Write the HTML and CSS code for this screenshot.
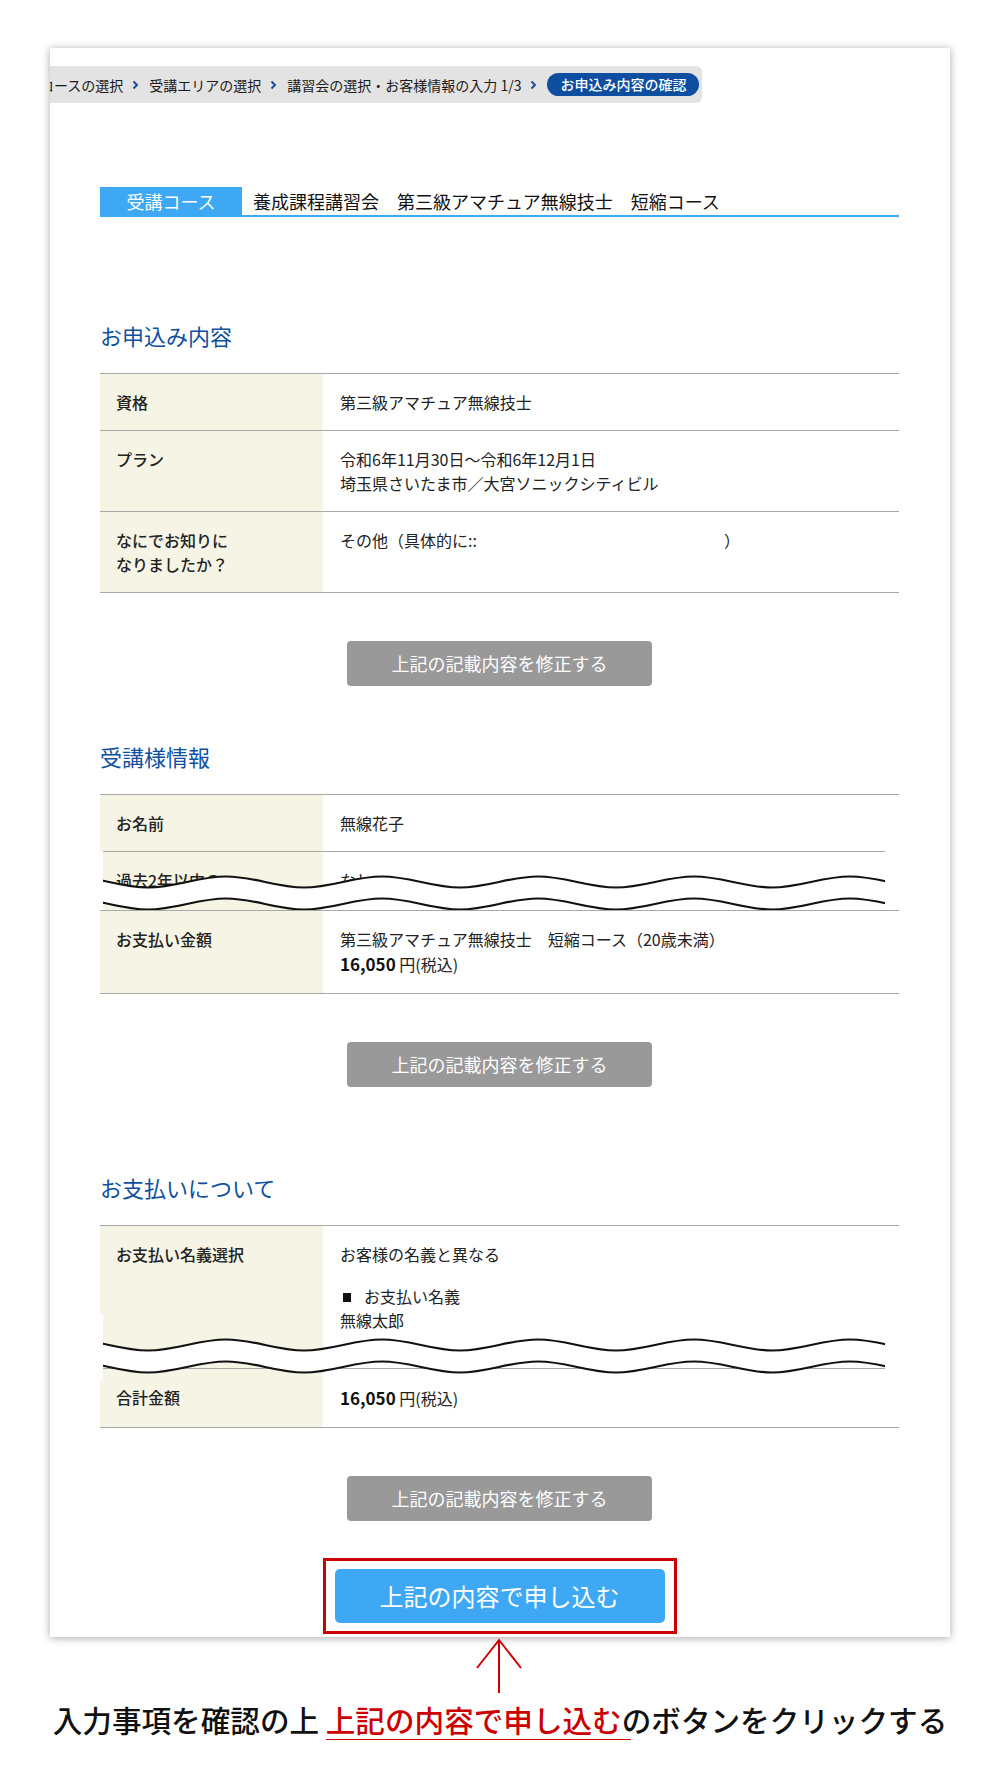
FILE: index.html
```html
<!DOCTYPE html>
<html lang="ja">
<head>
<meta charset="utf-8">
<title>お申込み内容の確認</title>
<link rel="stylesheet" href="styles.css">
</head>
<body>
<div class="page">
  <div class="card">
    <nav class="crumbs">
      <span class="crumb">コースの選択</span>
      <svg class="chev" viewBox="0 0 7 10"><path d="M1.5 1.5 L5 5 L1.5 8.5"/></svg>
      <span class="crumb">受講エリアの選択</span>
      <svg class="chev" viewBox="0 0 7 10"><path d="M1.5 1.5 L5 5 L1.5 8.5"/></svg>
      <span class="crumb">講習会の選択・お客様情報の入力 1/3</span>
      <svg class="chev" viewBox="0 0 7 10"><path d="M1.5 1.5 L5 5 L1.5 8.5"/></svg>
      <span class="crumb-current">お申込み内容の確認</span>
    </nav>

    <div class="content">
      <div class="course">
        <div class="course-label">受講コース</div>
        <div class="course-name">養成課程講習会　第三級アマチュア無線技士　短縮コース</div>
      </div>

      <h2 class="sec-title sec-title-1">お申込み内容</h2>
      <div class="table">
        <div class="row">
          <div class="th">資格</div>
          <div class="td">第三級アマチュア無線技士</div>
        </div>
        <div class="row">
          <div class="th">プラン</div>
          <div class="td">令和6年11月30日～令和6年12月1日<br>埼玉県さいたま市／大宮ソニックシティビル</div>
        </div>
        <div class="row">
          <div class="th">なにでお知りに<br>なりましたか？</div>
          <div class="td">その他（具体的に::<span class="blank"></span>）</div>
        </div>
      </div>
      <div class="btn-row"><button class="btn-edit">上記の記載内容を修正する</button></div>

      <h2 class="sec-title sec-title-2">受講様情報</h2>
      <div class="table">
        <div class="row">
          <div class="th">お名前</div>
          <div class="td">無線花子</div>
        </div>
        <div class="row row-cut">
          <div class="th">過去2年以内の</div>
          <div class="td">なし</div>
          <svg class="cut cut-a" viewBox="0 0 799 59" width="799" height="59">
            <path class="band" d="M-30 36.5 c28.4 0 49.6 11 78 11 s49.6 -11 78 -11 s49.6 11 78 11 s49.6 -11 78 -11 s49.6 11 78 11 s49.6 -11 78 -11 s49.6 11 78 11 s49.6 -11 78 -11 s49.6 11 78 11 s49.6 -11 78 -11 s49.6 11 78 11"/>
            <path class="wave" d="M-30 25.5 c28.4 0 49.6 11 78 11 s49.6 -11 78 -11 s49.6 11 78 11 s49.6 -11 78 -11 s49.6 11 78 11 s49.6 -11 78 -11 s49.6 11 78 11 s49.6 -11 78 -11 s49.6 11 78 11 s49.6 -11 78 -11 s49.6 11 78 11"/>
            <path class="wave" d="M-30 47.5 c28.4 0 49.6 11 78 11 s49.6 -11 78 -11 s49.6 11 78 11 s49.6 -11 78 -11 s49.6 11 78 11 s49.6 -11 78 -11 s49.6 11 78 11 s49.6 -11 78 -11 s49.6 11 78 11 s49.6 -11 78 -11 s49.6 11 78 11"/>
            <rect x="0" y="0" width="3" height="59" fill="#fff"/>
            <rect x="785" y="0" width="14" height="59" fill="#fff"/>
          </svg>
        </div>
        <div class="row">
          <div class="th">お支払い金額</div>
          <div class="td">第三級アマチュア無線技士　短縮コース（20歳未満）<br><span class="price"><b>16,050</b> 円(税込)</span></div>
        </div>
      </div>
      <div class="btn-row"><button class="btn-edit">上記の記載内容を修正する</button></div>

      <h2 class="sec-title sec-title-3">お支払いについて</h2>
      <div class="table">
        <div class="row row-host">
          <div class="th">お支払い名義選択</div>
          <div class="td td-tall">
            <p>お客様の名義と異なる</p>
            <p class="sub"><span class="sq"></span>お支払い名義</p>
            <p>無線太郎</p>
          </div>
          <svg class="cut cut-b" viewBox="0 0 799 67" width="799" height="67">
            <path class="band" d="M-30 36.5 c28.4 0 49.6 11 78 11 s49.6 -11 78 -11 s49.6 11 78 11 s49.6 -11 78 -11 s49.6 11 78 11 s49.6 -11 78 -11 s49.6 11 78 11 s49.6 -11 78 -11 s49.6 11 78 11 s49.6 -11 78 -11 s49.6 11 78 11"/>
            <path class="wave" d="M-30 25.5 c28.4 0 49.6 11 78 11 s49.6 -11 78 -11 s49.6 11 78 11 s49.6 -11 78 -11 s49.6 11 78 11 s49.6 -11 78 -11 s49.6 11 78 11 s49.6 -11 78 -11 s49.6 11 78 11 s49.6 -11 78 -11 s49.6 11 78 11"/>
            <path class="wave" d="M-30 47.5 c28.4 0 49.6 11 78 11 s49.6 -11 78 -11 s49.6 11 78 11 s49.6 -11 78 -11 s49.6 11 78 11 s49.6 -11 78 -11 s49.6 11 78 11 s49.6 -11 78 -11 s49.6 11 78 11 s49.6 -11 78 -11 s49.6 11 78 11"/>
            <rect x="0" y="0" width="3" height="67" fill="#fff"/>
            <rect x="785" y="0" width="14" height="67" fill="#fff"/>
          </svg>
        </div>
        <div class="row">
          <div class="th">合計金額</div>
          <div class="td"><span class="price"><b>16,050</b> 円(税込)</span></div>
        </div>
      </div>
      <div class="btn-row"><button class="btn-edit">上記の記載内容を修正する</button></div>

      <div class="submit-row">
        <div class="submit-frame"><button class="btn-submit">上記の内容で申し込む</button></div>
      </div>
    </div>
  </div>

  <svg class="arrow" viewBox="0 0 50 60" width="50" height="60">
    <path d="M24 3 L24 56"/>
    <path d="M2 31 L24 3 L46 31"/>
  </svg>
  <p class="caption">入力事項を確認の上 <span class="em">上記の内容で申し込む</span>のボタンをクリックする</p>
</div>
</body>
</html>
```

FILE: styles.css
```css
* {
  box-sizing: border-box;
  margin: 0;
  padding: 0;
}

body {
  margin: 0;
  background: #fff;
  font-family: "Noto Sans CJK JP", "Noto Sans", sans-serif;
  color: #222;
}

.page {
  width: 1000px;
  padding-top: 48px;
}

.card {
  width: 900px;
  margin-left: 50px;
  background: #fff;
  box-shadow: 0 1px 8px rgba(0, 0, 0, 0.35);
  overflow: hidden;
  padding-bottom: 3px;
}

/* breadcrumb */
.crumbs {
  display: inline-flex;
  align-items: center;
  height: 37px;
  margin-top: 18px;
  margin-left: -10px;
  padding-right: 3px;
  background: #e3e3e3;
  border-radius: 0 6px 6px 0;
  font-size: 14px;
  line-height: 20px;
  color: #1a1a1a;
  white-space: nowrap;
}

.chev {
  width: 7px;
  height: 10px;
  margin: 0 10px 0 9px;
  fill: none;
  stroke: #1b4f98;
  stroke-width: 2;
}

.crumb-current {
  display: inline-block;
  height: 23px;
  line-height: 23px;
  padding: 0 13px;
  border-radius: 12px;
  background: #0d4ea1;
  color: #fff;
  font-weight: 500;
}

/* content */
.content {
  padding: 0 51px 0 50px;
}

.course {
  display: flex;
  align-items: center;
  margin-top: 84px;
  border-bottom: 2px solid #3ea8f4;
}

.course-label {
  width: 142px;
  height: 28px;
  line-height: 28px;
  background: #3ea8f4;
  color: #fff;
  font-size: 18px;
  text-align: center;
}

.course-name {
  margin-left: 11px;
  font-size: 18px;
  line-height: 28px;
  color: #111;
}

.sec-title {
  font-size: 22px;
  line-height: 32px;
  font-weight: 400;
  color: #0f50a0;
}

.sec-title-1 { margin-top: 102px; }
.sec-title-2 { margin-top: 54px; }
.sec-title-3 { margin-top: 84px; }

.table {
  margin-top: 22px;
  border-bottom: 1px solid #a8a8a8;
}

.row {
  display: flex;
  border-top: 1px solid #a8a8a8;
}

.th {
  flex: none;
  width: 223px;
  padding: 16px 16px;
  background: #f5f4e5;
  font-size: 16px;
  line-height: 24px;
  font-weight: 500;
  color: #222;
}

.td {
  flex: 1;
  padding: 16px 17px;
  font-size: 16px;
  line-height: 24px;
  color: #222;
}

.blank {
  display: inline-block;
  width: 247px;
}

.price {
  display: inline-block;
  line-height: 26px;
}

.price b {
  font-size: 17px;
  font-weight: 700;
  color: #111;
}

.td-tall {
  padding-bottom: 36px;
}

.td .sub {
  margin-top: 18px;
}

.sq {
  display: inline-block;
  width: 8px;
  height: 9px;
  margin: 0 13px 0 3px;
  background: #111;
  vertical-align: 1px;
}

/* torn / cut overlays */
.row-cut {
  position: relative;
  height: 59px;
}

.row-host {
  position: relative;
}

.cut {
  position: absolute;
  left: 0;
  z-index: 2;
  overflow: hidden;
}

.cut-a { top: -1px; }
.cut-b { top: 88px; }

.cut .band {
  fill: none;
  stroke: #fff;
  stroke-width: 22;
}

.cut .wave {
  fill: none;
  stroke: #111;
  stroke-width: 2.2;
}

/* buttons */
.btn-row {
  display: flex;
  justify-content: center;
  margin-top: 48px;
}

.btn-edit {
  width: 305px;
  height: 45px;
  border: 0;
  border-radius: 4px;
  background: #999;
  color: #fff;
  font-family: "Noto Sans CJK JP", sans-serif;
  font-size: 18px;
  line-height: 45px;
}

.submit-row {
  display: flex;
  justify-content: center;
  margin-top: 37px;
}

.submit-frame {
  border: 3px solid #cc0000;
  padding: 8px 9px;
}

.btn-submit {
  display: block;
  width: 330px;
  height: 54px;
  border: 0;
  border-radius: 5px;
  background: #3ea8f4;
  color: #fff;
  font-family: "Noto Sans CJK JP", sans-serif;
  font-size: 24px;
  line-height: 54px;
}

/* annotation */
.arrow {
  display: block;
  margin: 0 0 0 475px;
  fill: none;
  stroke: #cc0000;
  stroke-width: 2;
}

.caption {
  margin-top: 3px;
  text-align: center;
  font-size: 29.6px;
  line-height: 40px;
  font-weight: 500;
  color: #111;
  white-space: nowrap;
}

.caption .em {
  display: inline-block;
  position: relative;
  color: #cc0000;
}

.caption .em::after {
  content: "";
  position: absolute;
  left: 0;
  right: -9px;
  bottom: -2px;
  height: 3px;
  background: #cc0000;
}
```
